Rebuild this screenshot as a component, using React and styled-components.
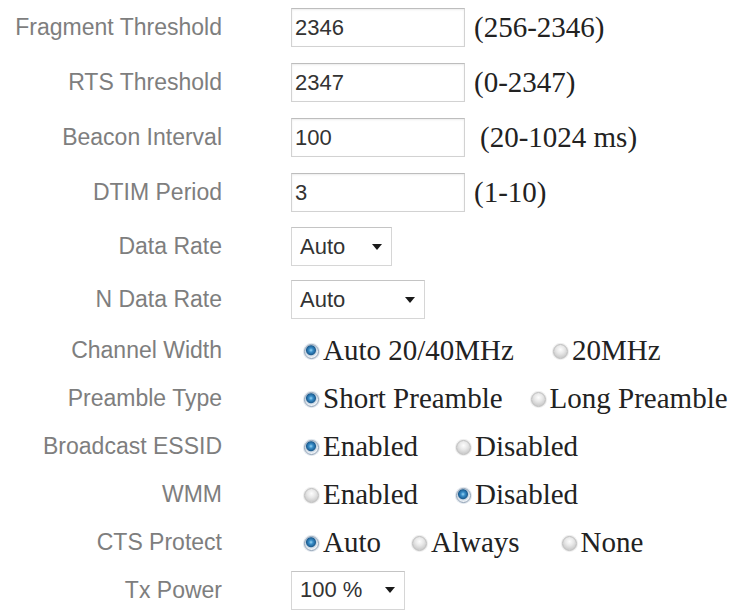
import React from "react";
import styled, { createGlobalStyle } from "styled-components";

const GlobalStyle = createGlobalStyle`
  body {
    margin: 0;
    background: #ffffff;
  }
`;

const Form = styled.div`
  display: flex;
  flex-direction: column;
  width: 734px;
`;

const Row = styled.div`
  display: flex;
  align-items: center;
  height: ${(p) => p.$height}px;
`;

const Label = styled.div`
  width: 222px;
  flex-shrink: 0;
  margin-right: 69px;
  text-align: right;
  font-family: "Liberation Sans", Arial, sans-serif;
  font-size: 23px;
  color: #7e7e7e;
  white-space: nowrap;
`;

const Field = styled.div`
  display: flex;
  align-items: center;
`;

const TextBox = styled.input`
  box-sizing: border-box;
  width: 174px;
  height: 39px;
  padding: 0 3px;
  border: 1px solid #d2d2d2;
  border-top-color: #bdbdbd;
  box-shadow: inset 0 1px 2px rgba(0, 0, 0, 0.08);
  font-family: "Liberation Sans", Arial, sans-serif;
  font-size: 22px;
  color: #333333;
  outline: none;
`;

const Range = styled.span`
  margin-left: ${(p) => p.$offset}px;
  font-family: "Liberation Serif", "Times New Roman", serif;
  font-size: 29px;
  color: #222222;
  white-space: nowrap;
`;

const SelectBox = styled.div`
  box-sizing: border-box;
  display: flex;
  align-items: center;
  justify-content: space-between;
  width: ${(p) => p.$width}px;
  height: 39px;
  padding: 0 9px 0 8px;
  border: 1px solid #d6d6d6;
  border-top-color: #c4c4c4;
  font-family: "Liberation Sans", Arial, sans-serif;
  font-size: 22px;
  color: #333333;
`;

const Caret = () => (
  <svg width="10" height="6" viewBox="0 0 10 6">
    <path d="M0 0 L10 0 L5 6 Z" fill="#1a1a1a" />
  </svg>
);

const RadioGroup = styled.div`
  display: flex;
  align-items: center;
  font-family: "Liberation Serif", "Times New Roman", serif;
  font-size: 29px;
  color: #222222;
  white-space: nowrap;
`;

const Option = styled.span`
  display: flex;
  align-items: center;
  margin-right: ${(p) => p.$space}px;
`;

const Dot = styled.span`
  box-sizing: border-box;
  width: 15px;
  height: 15px;
  margin: 2px 4px 0 13px;
  border-radius: 50%;
  border: 1px solid ${(p) => (p.$on ? "#8ea0b4" : "#bcbcbc")};
  box-shadow: 0 0 0 1px ${(p) => (p.$on ? "rgba(160, 180, 200, 0.35)" : "rgba(200, 200, 200, 0.35)")};
  background: ${(p) =>
    p.$on
      ? "radial-gradient(circle at 46% 40%, #9ad6f4 0, #3a8fca 2px, #1d5e92 4.5px, #c9d6e2 5.5px, #eef2f6 7px)"
      : "radial-gradient(circle at 50% 35%, #fdfdfd 0, #e8e8e8 4px, #cfcfcf 7.5px)"};
`;

const fields = [
  { label: "Fragment Threshold", value: "2346", range: "(256-2346)", offset: 9 },
  { label: "RTS Threshold", value: "2347", range: "(0-2347)", offset: 9 },
  { label: "Beacon Interval", value: "100", range: "(20-1024 ms)", offset: 15 },
  { label: "DTIM Period", value: "3", range: "(1-10)", offset: 9 },
];

const selects = [
  { label: "Data Rate", value: "Auto", width: 101 },
  { label: "N Data Rate", value: "Auto", width: 134 },
];

const radios = [
  {
    label: "Channel Width",
    options: [
      { text: "Auto 20/40MHz", on: true, space: 26 },
      { text: "20MHz", on: false, space: 0 },
    ],
  },
  {
    label: "Preamble Type",
    options: [
      { text: "Short Preamble", on: true, space: 15 },
      { text: "Long Preamble", on: false, space: 0 },
    ],
  },
  {
    label: "Broadcast ESSID",
    options: [
      { text: "Enabled", on: true, space: 25 },
      { text: "Disabled", on: false, space: 0 },
    ],
  },
  {
    label: "WMM",
    options: [
      { text: "Enabled", on: false, space: 25 },
      { text: "Disabled", on: true, space: 0 },
    ],
  },
  {
    label: "CTS Protect",
    options: [
      { text: "Auto", on: true, space: 18 },
      { text: "Always", on: false, space: 29 },
      { text: "None", on: false, space: 0 },
    ],
  },
];

export default function App() {
  return (
    <>
      <GlobalStyle />
      <Form>
        {fields.map((f) => (
          <Row key={f.label} $height={55}>
            <Label>{f.label}</Label>
            <Field>
              <TextBox defaultValue={f.value} readOnly />
              <Range $offset={f.offset}>{f.range}</Range>
            </Field>
          </Row>
        ))}
        {selects.map((s) => (
          <Row key={s.label} $height={53}>
            <Label>{s.label}</Label>
            <SelectBox $width={s.width}>
              {s.value}
              <Caret />
            </SelectBox>
          </Row>
        ))}
        {radios.map((r) => (
          <Row key={r.label} $height={48}>
            <Label>{r.label}</Label>
            <RadioGroup>
              {r.options.map((o) => (
                <Option key={o.text} $space={o.space}>
                  <Dot $on={o.on} />
                  {o.text}
                </Option>
              ))}
            </RadioGroup>
          </Row>
        ))}
        <Row $height={48}>
          <Label>Tx Power</Label>
          <SelectBox $width={114}>
            100 %
            <Caret />
          </SelectBox>
        </Row>
      </Form>
    </>
  );
}
